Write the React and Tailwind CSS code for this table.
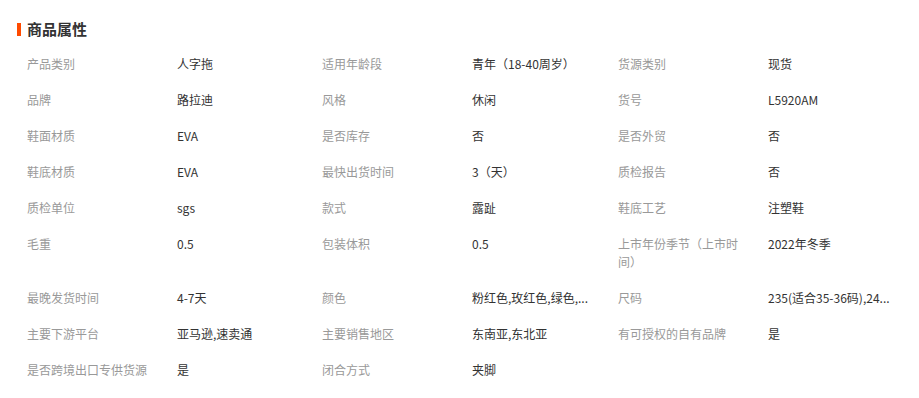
import React from 'react';

const rows = [
  [['产品类别', '人字拖'], ['适用年龄段', '青年（18-40周岁）'], ['货源类别', '现货']],
  [['品牌', '路拉迪'], ['风格', '休闲'], ['货号', 'L5920AM']],
  [['鞋面材质', 'EVA'], ['是否库存', '否'], ['是否外贸', '否']],
  [['鞋底材质', 'EVA'], ['最快出货时间', '3（天）'], ['质检报告', '否']],
  [['质检单位', 'sgs'], ['款式', '露趾'], ['鞋底工艺', '注塑鞋']],
  [['毛重', '0.5'], ['包装体积', '0.5'], ['上市年份季节（上市时间）', '2022年冬季']],
  [['最晚发货时间', '4-7天'], ['颜色', '粉红色,玫红色,绿色,...'], ['尺码', '235(适合35-36码),24...']],
  [['主要下游平台', '亚马逊,速卖通'], ['主要销售地区', '东南亚,东北亚'], ['有可授权的自有品牌', '是']],
  [['是否跨境出口专供货源', '是'], ['闭合方式', '夹脚']],
];

const valueWidths = ['w-[145px]', 'w-[146px]', 'w-[146px]'];

const App = () => {
  return (
    <div
      className="bg-white w-[919px] h-[398px] overflow-hidden pt-[18px] text-[12px] text-[#333]"
      style={{ fontFamily: '"Noto Sans CJK SC", "Noto Sans", sans-serif' }}
    >
      <div className="flex items-center h-[22px] pl-[17px]">
        <span className="w-[4px] h-[13px] bg-[#ff4a00] mr-[6px]" />
        <h2 className="text-[15px] font-bold text-[#333] leading-[22px]">商品属性</h2>
      </div>
      <div className="mt-[6px] pl-[27px]">
        {rows.map((row, i) => (
          <div key={i} className="flex items-start">
            {row.map(([label, value], j) => (
              <div key={j} className="flex items-start">
                <div className="w-[150px] pr-[22px] py-[9px] leading-[18px] text-[#999]">{label}</div>
                <div className={`${valueWidths[j]} pr-[10px] py-[9px] leading-[18px] text-[#333] font-normal whitespace-nowrap`}>
                  {value}
                </div>
              </div>
            ))}
          </div>
        ))}
      </div>
    </div>
  );
};

export default App;
